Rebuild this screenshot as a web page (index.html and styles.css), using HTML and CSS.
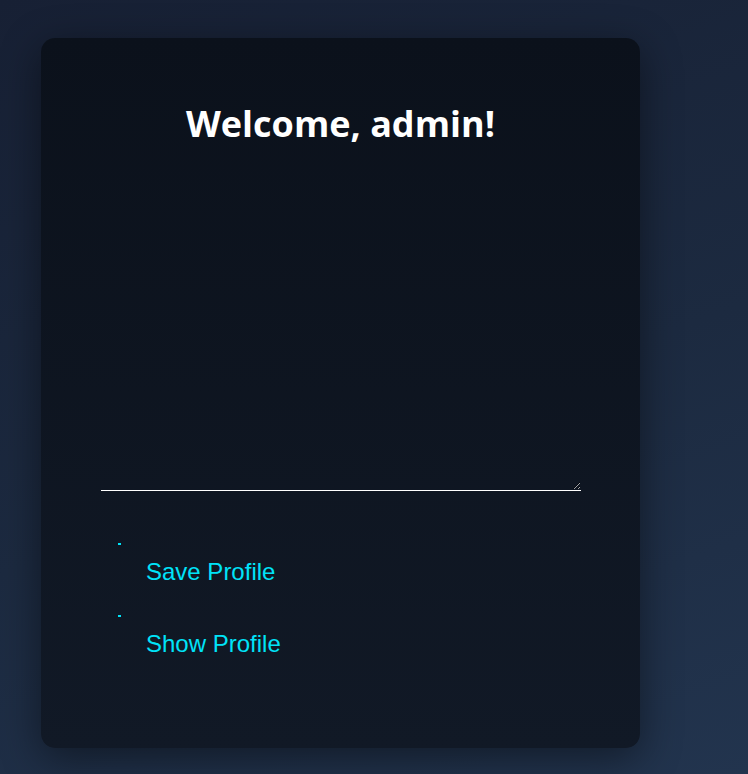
FILE: index.html
```html
<!doctype html>
<html>
<head>
   <title>Profile</title>
   <meta charset="utf-8">
   <link rel="stylesheet" href="styles.css">
</head>
<body>

   <div class="card">
      <h1>Welcome, admin!</h1>

      <textarea class="bio"></textarea>

      <div class="actions">
         <button class="action"><span class="dot"></span><span class="label">Save Profile</span></button>
         <button class="action"><span class="dot"></span><span class="label">Show Profile</span></button>
      </div>
   </div>

</body>
</html>
```

FILE: styles.css
```css
html, body{
   height: 100%;
}

body{
   margin: 0;
   background: linear-gradient(160deg, #172034 0%, #1c2a40 55%, #22344e 100%);
   font-family: "Liberation Sans", Arial, sans-serif;
   overflow: hidden;
}

.card{
   box-sizing: border-box;
   width: 599px;
   height: 710px;
   margin: 38px 0 0 41px;
   padding: 64px 60px 0;
   border-radius: 14px;
   background: linear-gradient(180deg, #0b111b 0%, #111926 100%);
   box-shadow: 0 10px 40px rgba(0, 0, 0, 0.45);
}

h1{
   margin: 0;
   font-family: "Open Sans", "Noto Sans", sans-serif;
   font-size: 36px;
   line-height: 44px;
   font-weight: 700;
   color: #fff;
   text-align: center;
}

.bio{
   display: block;
   box-sizing: border-box;
   width: 480px;
   height: 330px;
   margin-top: 15px;
   padding: 0;
   border: none;
   border-bottom: 1px solid #fff;
   background: transparent;
   color: #fff;
   outline: none;
}

.actions{
   display: flex;
   flex-direction: column;
   gap: 30px;
   margin-top: 52px;
}

.action{
   display: flex;
   align-items: flex-start;
   padding: 0;
   border: none;
   background: none;
   color: #00e3f8;
   font-family: "Liberation Sans", Arial, sans-serif;
   font-size: 24px;
   cursor: pointer;
   text-align: left;
}

.dot{
   width: 3px;
   height: 2px;
   margin: 0 0 0 17px;
   background: #00e3f8;
}

.label{
   margin: 16px 0 0 25px;
   line-height: 26px;
}
```
